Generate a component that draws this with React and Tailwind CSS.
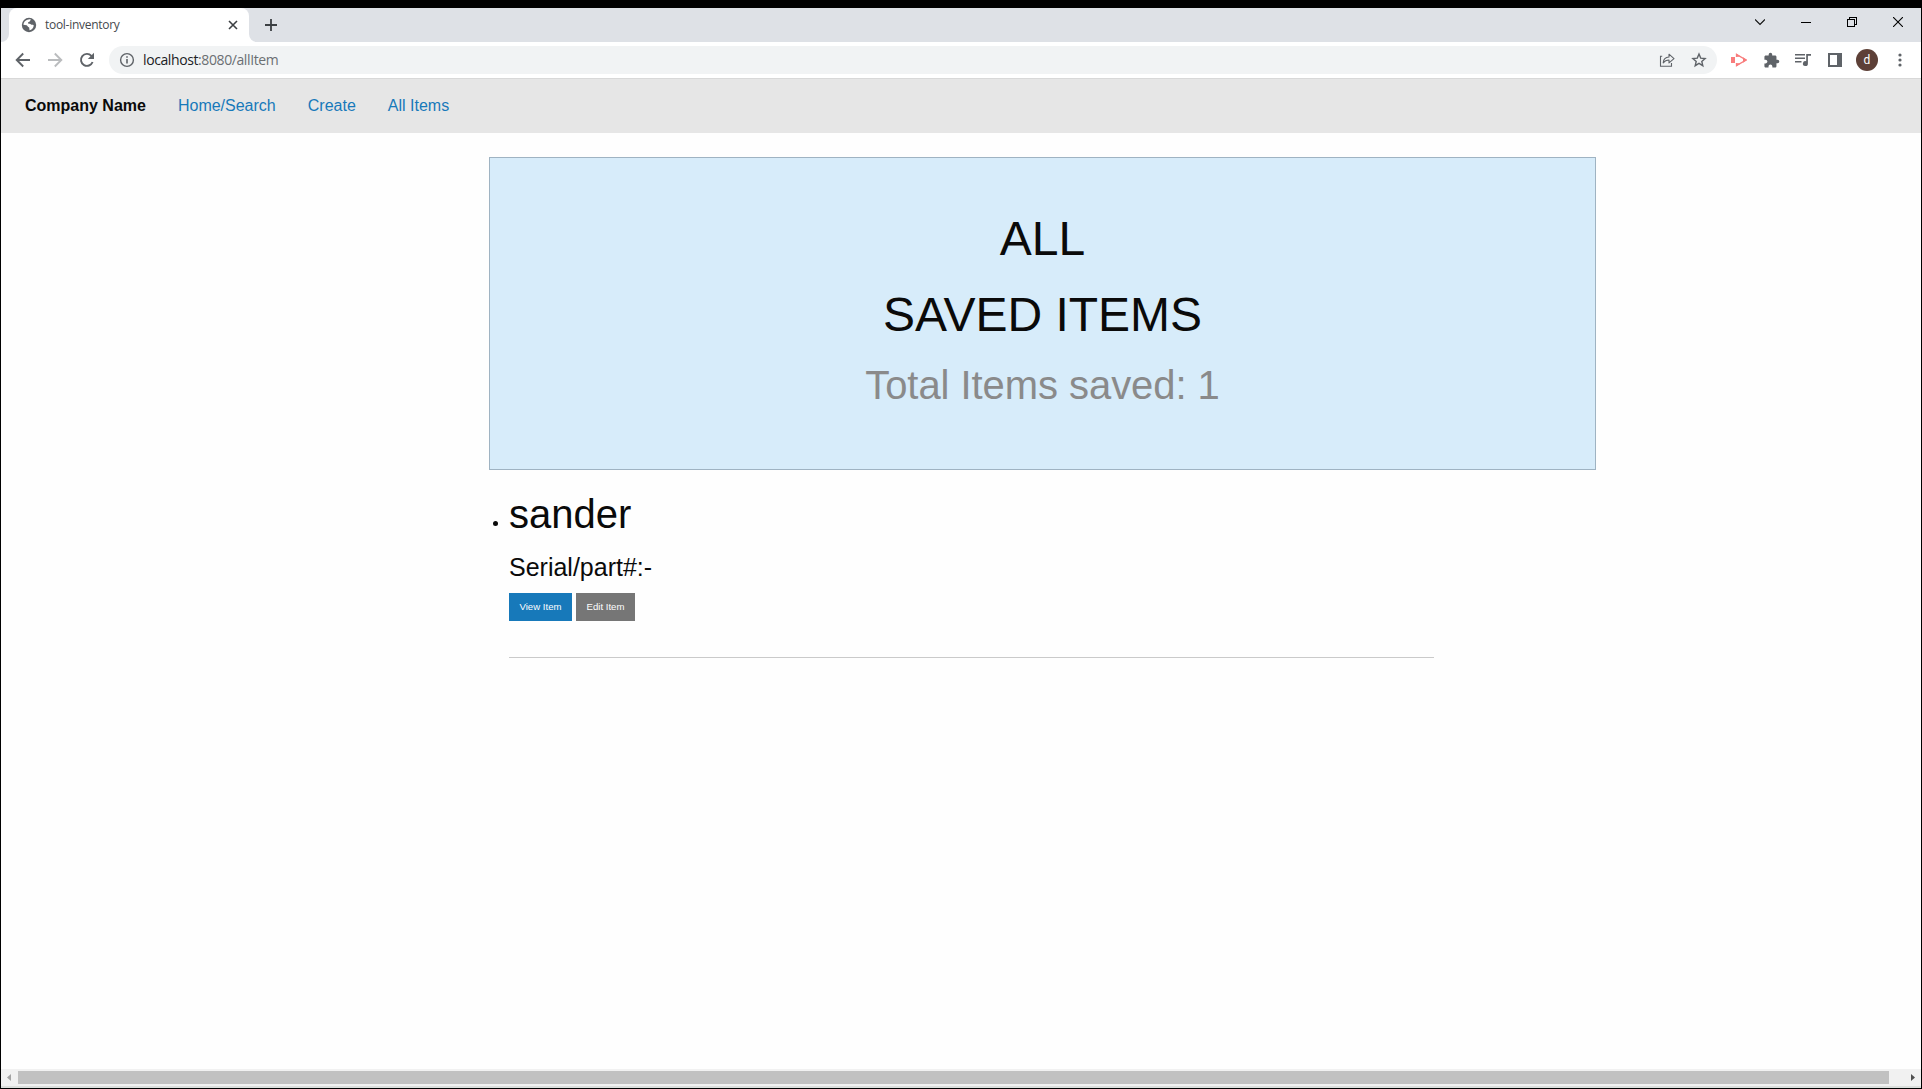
import React from "react";

const ui = "font-['Open_Sans',sans-serif]";

function TabStrip() {
  return (
    <div className="flex h-[34px] shrink-0 items-stretch bg-[#dee1e6]">
      <div className="flex w-2 flex-col bg-white">
        <div className="h-full rounded-br-lg bg-[#dee1e6]" />
      </div>
      <div className="flex w-[240px] items-center rounded-t-lg bg-white pl-3 pr-[11px]">
        <svg className="size-4 shrink-0" viewBox="0 0 16 16">
          <circle cx="8" cy="8" r="7.2" fill="#5f6368" />
          <path d="M6.3 2.8 L9.8 1.9 C8.8 3 9.9 3.2 8.9 4.3 C8 5 7.2 4.8 7 6 C6.8 7 8.8 6.4 9.7 7.3 C10.6 8.2 11.8 7.3 12.7 8.3 C12.8 10.8 11 13 8.3 13.3 C8.9 12 8 11.6 8.2 10.5 C6.8 10.3 6.7 8.9 5.6 8.3 L2.4 7.8 C2.6 5.5 4.2 3.4 6.3 2.8Z" fill="#fff" />
        </svg>
        <span className={`${ui} ml-2 grow whitespace-nowrap text-[12px] leading-4 tracking-[-0.28px] text-[#45494d]`}>tool-inventory</span>
        <svg className="size-[10px] shrink-0" viewBox="0 0 10 10" stroke="#3c4043" strokeWidth="1.6">
          <path d="M1 1l8 8M9 1l-8 8" />
        </svg>
      </div>
      <div className="flex w-2 flex-col bg-white">
        <div className="h-full rounded-bl-lg bg-[#dee1e6]" />
      </div>
      <div className="flex grow items-center pl-2">
        <svg className="size-[12px]" viewBox="0 0 12 12" stroke="#3c4043" strokeWidth="1.8">
          <path d="M6 0v12M0 6h12" />
        </svg>
      </div>
      <div className="flex items-center gap-9 pb-[6px] pr-[18px]">
        <svg className="size-[10px]" viewBox="0 0 10 10" fill="none" stroke="#111" strokeWidth="1.2">
          <path d="M0 2.5l5 5 5-5" />
        </svg>
        <svg className="size-[10px]" viewBox="0 0 10 10" fill="#000" shapeRendering="crispEdges">
          <path d="M0 5h10v1H0z" />
        </svg>
        <svg className="size-[10px]" viewBox="0 0 10 10" fill="none" stroke="#000" shapeRendering="crispEdges">
          <path d="M.5 2.5h7v7h-7zM2.5 2.5v-2h7v7h-2" />
        </svg>
        <svg className="size-[10px]" viewBox="0 0 10 10" fill="none" stroke="#000" strokeWidth="1.1">
          <path d="M0 0l10 10M10 0L0 10" />
        </svg>
      </div>
    </div>
  );
}

function Toolbar() {
  return (
    <div className="flex h-9 shrink-0 items-center bg-white">
      <svg className="ml-[14px] size-4" viewBox="0 0 16 16" fill="none" stroke="#5f6368" strokeWidth="1.9">
        <path d="M15 8H2M8.2 1.5L1.7 8l6.5 6.5" />
      </svg>
      <svg className="ml-4 size-4" viewBox="0 0 16 16" fill="none" stroke="#babcbe" strokeWidth="1.9">
        <path d="M1 8h13M7.800 1.5L14.3 8l-6.500 6.500" />
      </svg>
      <svg className="ml-4 size-4" viewBox="0 0 16 16" fill="none" stroke="#5f6368" strokeWidth="1.9">
        <path d="M13.6 10A6 6 0 1 1 12.4 3.8L14 5.3" />
        <path d="M15 .8v6.2H8.8z" fill="#5f6368" stroke="none" />
      </svg>
      <div className="ml-[14px] flex h-7 w-[1608px] items-center rounded-full bg-[#f1f3f4] pl-[10px] pr-[10px]">
        <svg className="size-4 shrink-0" viewBox="0 0 16 16">
          <circle cx="8" cy="8" r="6.4" fill="none" stroke="#5f6368" strokeWidth="1.4" />
          <path d="M7.2 7h1.6v4.6H7.2zM7.2 4.2h1.6v1.6H7.2z" fill="#5f6368" />
        </svg>
        <span className={`${ui} ml-2 grow whitespace-nowrap text-[14px] leading-5 tracking-[-0.4px] text-[#6b6f73]`}>
          <span className="text-[#202124]">localhost</span>:8080/allItem
        </span>
        <svg className="size-4" viewBox="0 0 16 16" fill="none" stroke="#5f6368" strokeWidth="1.1">
          <path d="M3.2 4.200H1.500v10h11V11" />
          <path d="M4.2 10.8C4.500 7.200 6.700 5.100 10 5V2.200l5 4.400-5 4.300V8C7.400 8 5.600 8.900 4.200 10.8z" strokeLinejoin="round" />
        </svg>
        <svg className="ml-4 size-4" viewBox="0 0 16 16" fill="none" stroke="#5f6368" strokeWidth="1.4">
          <path d="M8 2l1.7 4.1 4.4.4-3.3 2.9 1 4.3L8 11.4l-3.800 2.300 1-4.300-3.300-2.900 4.400-.4z" />
        </svg>
      </div>
      <svg className="ml-[14px] size-4" viewBox="0 0 16 16">
        <path d="M0 5h4v6H0z" fill="#f87c7c" />
        <path d="M5 5V1.600l5 2.900M5 11v3.400l5-2.900M12 5.300L16 8l-4 2.700" fill="#f87c7c" />
        <path d="M5.500 5V2.400L15 8l-9.500 5.600V11" fill="none" stroke="#f87c7c" strokeWidth="1.3" />
      </svg>
      <svg className="ml-4 size-[17px]" viewBox="0 0 24 24" fill="#5f6368">
        <path d="M20.5 11H19V7c0-1.100-.9-2-2-2h-4V3.500a2.500 2.500 0 0 0-5 0V5H4c-1.100 0-1.990.9-1.990 2v3.800H3.500c1.490 0 2.700 1.210 2.700 2.700s-1.210 2.700-2.700 2.700H2V20c0 1.100.9 2 2 2h3.800v-1.500c0-1.490 1.210-2.700 2.700-2.700s2.700 1.210 2.700 2.700V22H17c1.100 0 2-.9 2-2v-4h1.500a2.500 2.500 0 0 0 0-5z" />
      </svg>
      <svg className="ml-[15px] size-4" viewBox="0 0 16 16" fill="#5f6368">
        <path d="M0 2h10v1.500H0zM0 5.500h10V7H0zM0 9h6.500v1.500H0zM11.200 2H16v1.700h-3.100v7.800a2.500 2.500 0 1 1-1.700-2.300z" />
      </svg>
      <svg className="ml-[17px] size-[14px]" viewBox="0 0 14 14" fill="#5f6368">
        <path d="M0 0h14v14H0zM2 2v10h7V2z" fillRule="evenodd" />
      </svg>
      <div className="ml-[14px] flex size-[22px] items-center justify-center rounded-full bg-[#5d4037] font-[Roboto,sans-serif] text-[12px] leading-none text-white">d</div>
      <svg className="ml-5 h-[14px] w-1" viewBox="0 0 4 14" fill="#5f6368">
        <circle cx="2" cy="2" r="1.6" />
        <circle cx="2" cy="7" r="1.6" />
        <circle cx="2" cy="12" r="1.6" />
      </svg>
    </div>
  );
}

function NavBar() {
  return (
    <nav className="flex h-[55px] shrink-0 items-center gap-8 border-t border-[#d8d8d8] bg-[#e6e6e6] pl-6 text-[16px] leading-4 text-[#1779ba]">
      <span className="font-bold text-[#0a0a0a]">Company Name</span>
      <a>Home/Search</a>
      <a>Create</a>
      <a>All Items</a>
    </nav>
  );
}

function Callout() {
  return (
    <section className="ml-[488px] mt-6 h-[313px] w-[1107px] border border-[#9fb3c2] bg-[#d7ecfa] pt-[47px] text-center text-[#0a0a0a]">
      <h1 className="text-[48px] leading-[67px]">ALL</h1>
      <h1 className="mt-[9px] text-[48px] leading-[67px]">SAVED ITEMS</h1>
      <h2 className="mt-[9px] text-[40px] leading-[56px] tracking-[-0.06px] text-[#8a8a8a]">Total Items saved: 1</h2>
    </section>
  );
}

function ItemRow() {
  return (
    <div className="ml-[492px] mt-4 flex text-[#0a0a0a]">
      <div className="mr-[11px] mt-[35px] size-[5px] rounded-full bg-[#0a0a0a]" />
      <div className="w-[925px]">
        <h2 className="text-[40px] leading-[56px]">sander</h2>
        <h4 className="mt-2 text-[25px] leading-[35px]">Serial/part#:-</h4>
        <div className="mt-2 flex gap-1 text-[9.6px] leading-none text-[#fefefe]">
          <button className="h-7 w-[63px] bg-[#1779ba]">View Item</button>
          <button className="h-7 w-[59px] bg-[#767676]">Edit Item</button>
        </div>
        <div className="mt-9 h-px bg-[#cacaca]" />
      </div>
    </div>
  );
}

function ScrollBar() {
  return (
    <div className="flex h-[17px] shrink-0 items-center bg-[#f1f1f1]">
      <svg className="ml-[6px] h-[7px] w-1" viewBox="0 0 4 7" fill="#a3a3a3"><path d="M4 0v7L0 3.500z" /></svg>
      <div className="ml-[7px] h-[13px] w-[1871px] bg-[#c1c1c1]" />
      <svg className="ml-[22px] h-[7px] w-1" viewBox="0 0 4 7" fill="#505050"><path d="M0 0v7l4-3.500z" /></svg>
    </div>
  );
}

export default function App() {
  return (
    <div className="flex h-[1089px] w-[1922px] flex-col overflow-hidden bg-black px-px pb-px pt-2 font-['Liberation_Sans',Arial,sans-serif]">
      <TabStrip />
      <Toolbar />
      <NavBar />
      <main className="grow bg-[#fefefe]">
        <Callout />
        <ItemRow />
      </main>
      <ScrollBar />
      <div className="h-[2px] shrink-0 bg-[#dcdfdc]" />
    </div>
  );
}
